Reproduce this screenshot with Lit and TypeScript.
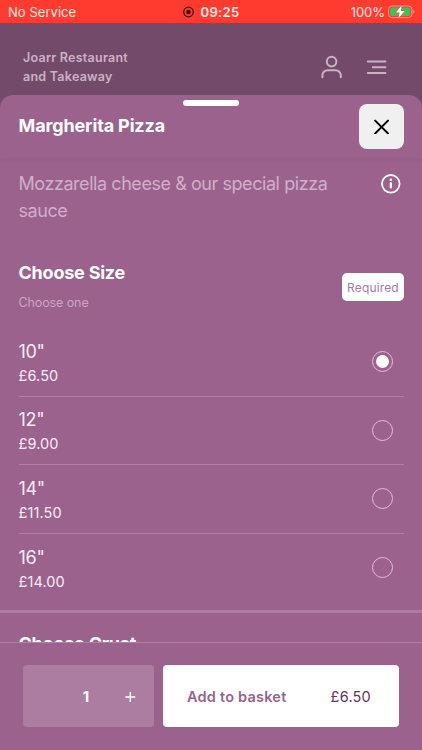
import { LitElement, html, css } from "lit";
import { customElement, state } from "lit/decorators.js";
import { classMap } from "lit/directives/class-map.js";

interface Size {
  name: string;
  price: string;
}

const SIZES: Size[] = [
  { name: '10"', price: "£6.50" },
  { name: '12"', price: "£9.00" },
  { name: '14"', price: "£11.50" },
  { name: '16"', price: "£14.00" },
];

@customElement("status-bar")
class StatusBar extends LitElement {
  static styles = css`
    :host {
      display: grid;
      grid-template-columns: 1fr auto 1fr;
      align-items: center;
      height: 23px;
      box-sizing: border-box;
      padding: 1px 7px 0 8px;
      background: #ff3b30;
      color: #ffe9e6;
      font-size: 13px;
      line-height: 22px;
    }
    .carrier {
      letter-spacing: 0.05px;
    }
    .clock {
      display: flex;
      align-items: center;
      gap: 6px;
      font-weight: 600;
      letter-spacing: 0.35px;
    }
    .power {
      display: flex;
      align-items: center;
      justify-content: flex-end;
      gap: 3px;
      letter-spacing: -0.05px;
    }
    svg {
      display: block;
    }
  `;

  render() {
    return html`
      <span class="carrier">No Service</span>
      <span class="clock">
        <svg width="11" height="12" viewBox="0 0 11 12">
          <circle cx="5.5" cy="6" r="4.8" fill="none" stroke="#3d0906" stroke-width="1.2" />
          <circle cx="5.5" cy="6" r="2.3" fill="#3d0906" />
        </svg>
        <span>09:25</span>
      </span>
      <span class="power">
        <span>100%</span>
        <svg width="27" height="14" viewBox="0 0 27 14">
          <rect x="0.5" y="1" width="23.4" height="11.6" rx="3.4" fill="none" stroke="#ff9a8f" />
          <rect x="2" y="2.5" width="20.4" height="8.6" rx="2" fill="#3fbf58" />
          <path d="M25.2 4.8c1.6.5 1.6 3.5 0 4z" fill="#ff9a8f" />
          <path d="M13.7.6 7.8 7.5h3.7L10.4 13.2 16.8 6h-3.9z" fill="#fff" stroke="#ff3b30" stroke-width="1" paint-order="stroke" stroke-linejoin="round" />
        </svg>
      </span>
    `;
  }
}

@customElement("size-option")
class SizeOption extends LitElement {
  static properties = { name: {}, price: {}, checked: { type: Boolean } };
  declare name: string;
  declare price: string;
  declare checked: boolean;

  static styles = css`
    :host {
      display: flex;
      align-items: center;
      justify-content: space-between;
      height: 68.5px;
      box-sizing: border-box;
      padding-right: 11.5px;
    }
    :host(:not(:last-child)) {
      border-bottom: 1.5px solid #b27fa6;
    }
    .name {
      font-size: 18px;
      line-height: 25px;
      letter-spacing: -0.3px;
    }
    .price {
      font-size: 14.5px;
      line-height: 24px;
      letter-spacing: 0.1px;
    }
    .labels {
      color: #fbeaf7;
      padding-top: 3px;
    }
    .radio {
      display: flex;
      align-items: center;
      justify-content: center;
      width: 21px;
      height: 21px;
      box-sizing: border-box;
      border: 1px solid #e2bfdb;
      border-radius: 50%;
    }
    .radio.on::after {
      content: "";
      width: 13px;
      height: 13px;
      flex: none;
      border-radius: 50%;
      background: #fff;
    }
  `;

  render() {
    return html`
      <div class="labels">
        <div class="name">${this.name}</div>
        <div class="price">${this.price}</div>
      </div>
      <span class=${classMap({ radio: true, on: this.checked })}></span>
    `;
  }
}

@customElement("app-root")
class AppRoot extends LitElement {
  @state() private selected = 0;
  @state() private quantity = 1;

  static styles = css`
    :host {
      display: flex;
      flex-direction: column;
      height: 750px;
      overflow: hidden;
      background: #744a6a;
      font-family: Inter, "Liberation Sans", sans-serif;
      color: #fff;
      white-space: nowrap;
    }
    svg {
      display: block;
    }
    .shop {
      display: flex;
      justify-content: space-between;
      height: 72px;
      box-sizing: border-box;
      padding: 25px 35px 0 23px;
      color: #c9b3c4;
    }
    .shop-name {
      font-size: 12.5px;
      line-height: 19px;
      font-weight: 600;
      letter-spacing: 0.25px;
    }
    .shop-icons {
      display: flex;
      gap: 24px;
      padding-top: 7px;
    }
    .sheet {
      display: flex;
      flex-direction: column;
      flex: 1;
      min-height: 0;
      border-radius: 13px 13px 0 0;
      background: #9a628c;
      overflow: hidden;
    }
    .head {
      position: relative;
      flex: none;
      display: flex;
      justify-content: space-between;
      align-items: flex-start;
      height: 63px;
      box-sizing: border-box;
      padding: 9px 18px 0 18.5px;
      box-shadow: 0 0 6px rgba(85, 40, 75, 0.13);
    }
    .grabber {
      position: absolute;
      left: 183px;
      top: 5px;
      width: 56px;
      height: 5.5px;
      border-radius: 3px;
      background: #fff;
    }
    h1,
    h2 {
      margin: 0;
      font-size: 18px;
      font-weight: 700;
      line-height: 24px;
      letter-spacing: -0.22px;
    }
    h1 {
      padding-top: 10px;
      letter-spacing: -0.14px;
    }
    .close {
      display: flex;
      align-items: center;
      justify-content: center;
      width: 45px;
      height: 45px;
      padding: 0;
      border: 0;
      border-radius: 8px;
      background: #f1f0f1;
    }
    .content {
      flex: 1;
      min-height: 0;
      overflow: hidden;
    }
    .about {
      display: flex;
      justify-content: space-between;
      padding: 12px 21px 0 18.5px;
      height: 101px;
      box-sizing: border-box;
    }
    .about p {
      margin: 0;
      font-size: 18px;
      line-height: 27px;
      letter-spacing: -0.44px;
      color: #d2aecb;
    }
    .about svg {
      margin-top: 4px;
    }
    .group-head {
      display: flex;
      justify-content: space-between;
      padding: 2px 18px 0 18.5px;
      height: 69px;
      box-sizing: border-box;
    }
    .hint {
      margin-top: 9px;
      font-size: 12.5px;
      line-height: 18px;
      letter-spacing: -0.1px;
      color: #cda5c5;
    }
    .required {
      width: 62px;
      height: 28px;
      margin-top: 12px;
      border-radius: 5px;
      background: #fff;
      color: #a878a0;
      font-size: 12px;
      line-height: 29px;
      letter-spacing: 0.15px;
      text-align: center;
    }
    .sizes {
      padding: 0 18px 0 18.5px;
      height: 282px;
      box-sizing: border-box;
    }
    .rule {
      height: 3px;
      background: #ae7ba2;
    }
    .next {
      padding: 19px 18.5px 0;
    }
    .bar {
      flex: none;
      display: flex;
      gap: 9px;
      height: 108px;
      box-sizing: border-box;
      padding: 22.3px 23px 0;
      border-top: 1px solid #b27fa6;
    }
    .qty {
      display: grid;
      grid-template-columns: 42px 1fr 47px;
      align-items: center;
      width: 131px;
      height: 62px;
      border-radius: 4px;
      background: #ac7ca1;
      text-align: center;
      font-size: 15px;
      font-weight: 700;
    }
    .add {
      flex: 1;
      display: flex;
      align-items: center;
      justify-content: space-between;
      height: 62px;
      box-sizing: border-box;
      padding: 0 28px 0 24px;
      border: 0;
      border-radius: 4px;
      background: #fff;
      font: 600 14.5px Inter, "Liberation Sans", sans-serif;
      letter-spacing: 0.22px;
      color: #9a628c;
    }
    .total {
      font-weight: 400;
      color: #68325c;
    }
  `;

  render() {
    return html`
      <status-bar></status-bar>
      <header class="shop">
        <div class="shop-name">Joarr Restaurant<br />and Takeaway</div>
        <div class="shop-icons">
          <svg width="22" height="24" viewBox="0 0 22 24" fill="none" stroke="currentColor" stroke-width="2" stroke-linecap="round">
            <circle cx="11.6" cy="6.6" r="4.8" />
            <path d="M2.4 22.3v-1.8a5.2 5.2 0 0 1 5.2-5.2h8a5.2 5.2 0 0 1 5.2 5.2v1.8" />
          </svg>
          <svg width="21" height="24" viewBox="0 0 21 24" fill="none" stroke="currentColor" stroke-width="2" stroke-linecap="round">
            <path d="M1.8 6.5h17.6M6.8 12.2h12.6M1.8 17.9h17.6" />
          </svg>
        </div>
      </header>
      <main class="sheet">
        <div class="head">
          <span class="grabber"></span>
          <h1>Margherita Pizza</h1>
          <button class="close" aria-label="Close">
            <svg width="15" height="15" viewBox="0 0 15 15" stroke="#000" stroke-width="2" stroke-linecap="round">
              <path d="m1.2 1.6 12.8 12.8M14 1.6 1.2 14.4" />
            </svg>
          </button>
        </div>
        <div class="content">
          <section class="about">
            <p>Mozzarella cheese &amp; our special pizza<br />sauce</p>
            <svg width="20" height="20" viewBox="0 0 20 20" fill="none" stroke="#fff">
              <circle cx="9.8" cy="9.8" r="8.8" stroke-width="1.8" />
              <path d="M9.8 9v4.6" stroke-width="2.2" stroke-linecap="round" />
              <circle cx="9.8" cy="5.7" r="1.3" fill="#fff" stroke="none" />
            </svg>
          </section>
          <div class="group-head">
            <div>
              <h2>Choose Size</h2>
              <div class="hint">Choose one</div>
            </div>
            <span class="required">Required</span>
          </div>
          <div class="sizes">
            ${SIZES.map(
              (s, i) => html`<size-option
                .name=${s.name}
                .price=${s.price}
                .checked=${i === this.selected}
                @click=${() => (this.selected = i)}
              ></size-option>`
            )}
          </div>
          <div class="rule"></div>
          <h2 class="next">Choose Crust</h2>
        </div>
        <footer class="bar">
          <div class="qty">
            <span></span>
            <span>${this.quantity}</span>
            <svg width="47" height="14" viewBox="0 0 47 14" stroke="#fff" stroke-width="1.4" @click=${() => this.quantity++}>
              <path d="M18.3 8h10M23.3 3v10" />
            </svg>
          </div>
          <button class="add"><span>Add to basket</span><span class="total">£6.50</span></button>
        </footer>
      </main>
    `;
  }
}
